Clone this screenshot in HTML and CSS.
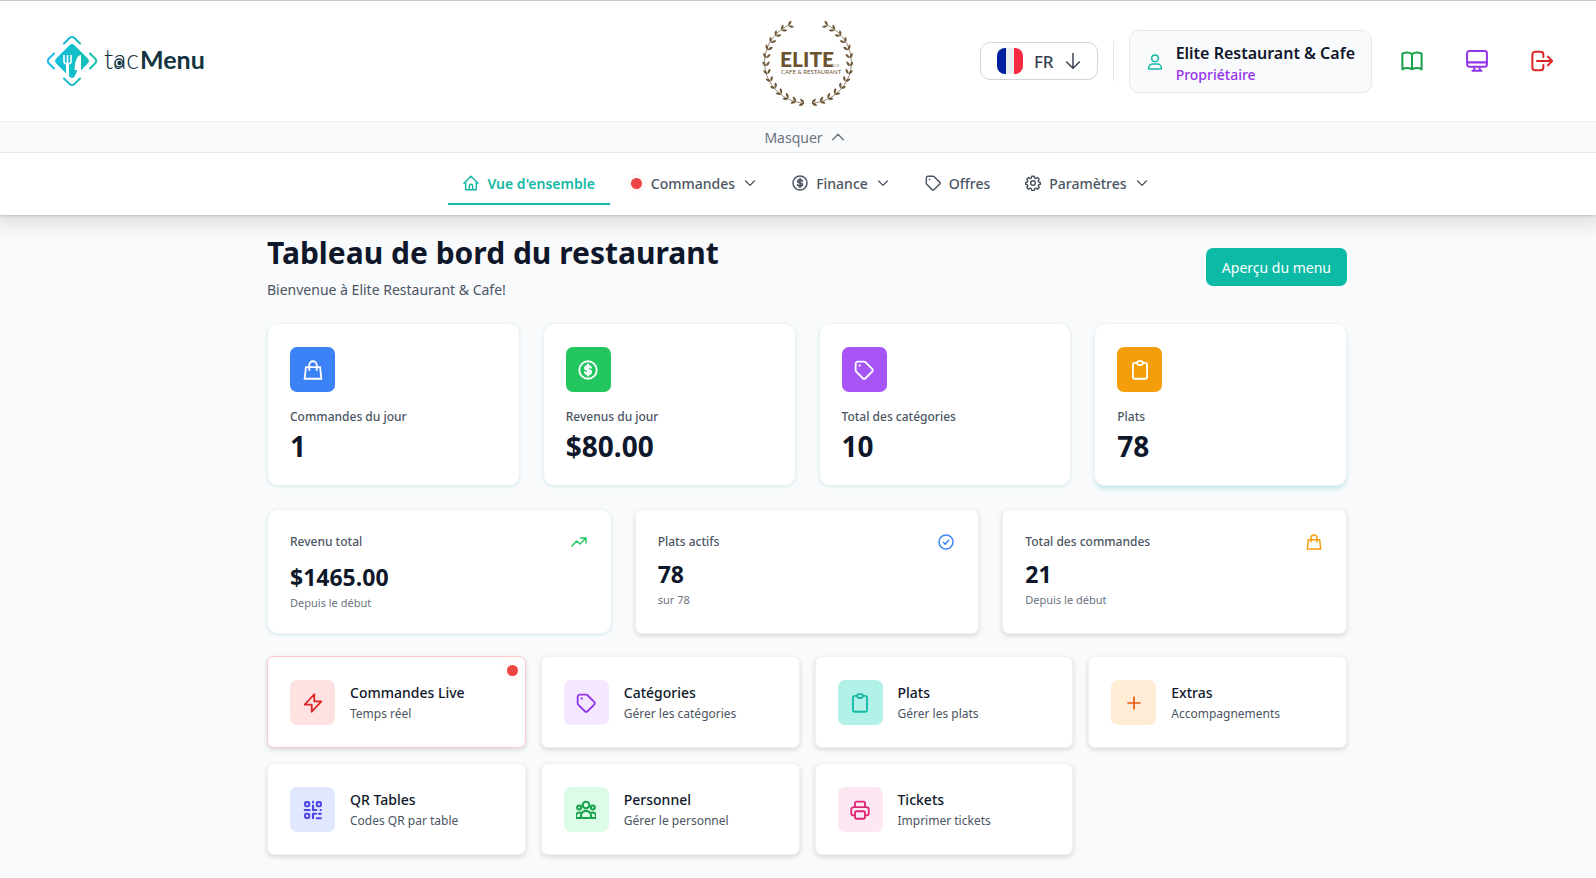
FILE: index.html
```html
<!DOCTYPE html>
<html lang="fr">
<head>
  <meta charset="UTF-8">
  <meta name="viewport" content="width=device-width, initial-scale=1.0">
  <title>tacMenu - Tableau de bord</title>
  <link rel="stylesheet" href="styles.css">
</head>
<body>
  <!-- Shared icons -->
  <svg class="sprite" aria-hidden="true">
    <symbol id="i-home" viewBox="0 0 24 24"><path d="M1.5 12.5 12 2l10.500 10.500M4 10.500V22h16V10.500M9.500 22v-5.500a2.500 2.500 0 0 1 5 0V22"/></symbol>
    <symbol id="i-dollar" viewBox="0 0 24 24"><circle cx="12" cy="12" r="10.500"/><path stroke-width="2.600" d="M15.500 9.200C15 7.900 13.700 7.400 12 7.400c-2 0-3.400.8-3.400 2.300 0 3.400 7 1.400 7 4.600 0 1.500-1.500 2.400-3.600 2.400-1.900 0-3.200-.7-3.700-2M12 5.500v13"/></symbol>
    <symbol id="i-tag" viewBox="0 0 24 24"><path d="M2 4.500A2.500 2.500 0 0 1 4.500 2H12a2.500 2.500 0 0 1 1.800.7l8 8a2.300 2.300 0 0 1 0 3.200l-8 8a2.300 2.300 0 0 1-3.200 0l-8-8A2.500 2.500 0 0 1 2 12.200zM6.500 6.600h.6"/></symbol>
    <symbol id="i-gear" viewBox="0 0 24 24"><circle cx="12" cy="12" r="3.500"/><path d="M10.200 1.800h3.600l.8 2.700 1.600.7 2.500-1.400 2.500 2.500-1.400 2.500.7 1.600 2.700.8v2.600l-2.700.8-.7 1.600 1.400 2.500-2.500 2.500-2.500-1.400-1.600.7-.8 2.700h-3.600l-.8-2.700-1.600-.7-2.500 1.400-2.500-2.500 1.400-2.500-.7-1.600-2.700-.8v-2.600l2.700-.8.7-1.600-1.400-2.500 2.500-2.500 2.500 1.400 1.600-.7z"/></symbol>
    <symbol id="i-down" viewBox="0 0 24 24"><path d="m4.500 8.500 7.500 7.500 7.500-7.500"/></symbol>
    <symbol id="i-up" viewBox="0 0 24 24"><path d="m4 16 8-8 8 8"/></symbol>
    <symbol id="i-bag" viewBox="0 0 24 24"><path stroke-linejoin="miter" d="M3.500 8.500h17L22 22.500H2zM7.500 12V6a4.500 4.500 0 0 1 9 0v6"/></symbol>
    <symbol id="i-clip" viewBox="0 0 24 24"><path d="M8.500 3.500H6A2.500 2.500 0 0 0 3.500 6v14A2.500 2.500 0 0 0 6 22.500h12a2.500 2.500 0 0 0 2.500-2.500V6A2.500 2.500 0 0 0 18 3.500h-2.500"/><rect x="8.500" y="1.300" width="7" height="4.700" rx="2.300"/></symbol>
    <symbol id="i-trend" viewBox="0 0 24 24"><path d="m1.500 18 7-7.500 5 4.500L22 6.500M14.500 6H22.500v7.500"/></symbol>
    <symbol id="i-check" viewBox="0 0 24 24"><circle cx="12" cy="12" r="10.500"/><path d="m8 12.500 2.800 2.700L16 9.500"/></symbol>
    <symbol id="i-bolt" viewBox="0 0 24 24"><path d="M13.500 1.500 2 14h8.500v8.500L22 10h-8.500z"/></symbol>
    <symbol id="i-plus" viewBox="0 0 24 24"><path d="M12 3v18M3 12h18"/></symbol>
    <symbol id="i-qr" viewBox="0 0 24 24"><rect x="2.500" y="2.500" width="5" height="5" rx="1.500"/><rect x="16.500" y="2.500" width="5" height="5" rx="1.500"/><rect x="2.500" y="16.500" width="5" height="5" rx="1.500"/><path d="M12 2v1M12 6.500V12h4M2 12h6M21 12h.5M12 21.800v-5.300h3.500M19 16.500h2.500M16.500 21.800h5"/></symbol>
    <symbol id="i-team" viewBox="0 0 24 24"><circle cx="12" cy="6" r="4"/><circle cx="3.800" cy="9" r="2.400"/><circle cx="20.200" cy="9" r="2.400"/><path d="M6 21.500V19a6 6 0 0 1 12 0v2.500zM6 21.500H0V18.500A4 4 0 0 1 6 15.500M18 21.500h6V18.500a4 4 0 0 0-6-3"/></symbol>
    <symbol id="i-print" viewBox="0 0 24 24"><path d="M6 8.500V4a2 2 0 0 1 2-2h8a2 2 0 0 1 2 2v4.500M6 18.500H4A2.500 2.500 0 0 1 1.500 16v-4.500A3 3 0 0 1 4.500 8.500h15a3 3 0 0 1 3 3V16a2.500 2.500 0 0 1-2.500 2.500h-2"/><rect x="6" y="13.500" width="12" height="9" rx="2"/></symbol>
    <symbol id="i-book" viewBox="0 0 24 24"><path d="M12 4.500C9 2.500 4.500 2.700 1.500 4v17c3-1.500 7.500-1.500 10.500 0 3-1.500 7.500-1.500 10.500 0V4C19.500 2.700 15 2.500 12 4.500zM12 4.500V21"/></symbol>
    <symbol id="i-screen" viewBox="0 0 24 24"><rect x="1.200" y="1.200" width="21.600" height="17" rx="2.500"/><path d="M1.500 13.500h21M9.500 18.500 8.500 22.500M14.500 18.500l1 4M7 22.700h10"/></symbol>
    <symbol id="i-logout" viewBox="0 0 24 24"><path d="M13.500 7.500V5A3 3 0 0 0 10.500 2H4.500a3 3 0 0 0-3 3v14a3 3 0 0 0 3 3h6a3 3 0 0 0 3-3v-2.500M6.500 12H23M18.500 7.200 23 12l-4.500 4.800"/></symbol>
    <symbol id="i-user" viewBox="0 0 24 24"><circle cx="12" cy="6.500" r="5"/><path d="M2.500 22.500v-1.500a6 6 0 0 1 6-6h7a6 6 0 0 1 6 6v1.500z"/></symbol>
    <symbol id="i-arrow" viewBox="0 0 24 24"><path d="M12 0v23M2.500 13.500l9.500 9.500 9.500-9.500"/></symbol>
    <symbol id="leaf" viewBox="-5 -5 10 10" overflow="visible"><path d="M0 3.500Q-4.800 2.500-4.500-2.500-.2-1.500 0 3.500Q.2-1.500 4.500-2.500 4.800 2.500 0 3.500z"/></symbol>
  </svg>

  <header class="header">
    <div class="topbar">
      <a class="brand" href="#" aria-label="tacMenu">
        <svg width="164" height="52" viewBox="0 0 164 52">
          <defs>
            <linearGradient id="teal" gradientUnits="userSpaceOnUse" x1="0" y1="20" x2="50" y2="30">
              <stop offset="0" stop-color="#1fb6ee"/>
              <stop offset="1" stop-color="#14c3a8"/>
            </linearGradient>
            <linearGradient id="teal-box" x1="0" y1="1" x2="1" y2="0">
              <stop offset="0" stop-color="#15bde0"/>
              <stop offset="1" stop-color="#14bfb2"/>
            </linearGradient>
          </defs>
          <rect x="12" y="13" width="26" height="26" rx="4" fill="url(#teal-box)" transform="rotate(45 25 26)"/>
          <g fill="none" stroke="url(#teal)" stroke-width="2" stroke-linecap="round" stroke-linejoin="round">
            <path d="M17 8.500 22.500 3q2.500-2 5 0L33 8.500M17 43.500l5.500 5.500q2.500 2 5 0l5.500-5.500M7 18.500 1.500 24q-1.500 2 0 4L7 33.500M43 18.500l5.500 5.500q1.500 2 0 4L43 33.500"/>
          </g>
          <path d="M17 20v6.500q0 2.500 3.500 2.500t3.500-2.500V20M20.500 20v8" fill="none" stroke="#fff" stroke-width="1.600"/>
          <path d="M19 28h3v14l-3-2.500zM34 20q-6 1-6.500 15H30q-1 5-3 6.500 4.500-.5 7-3z" fill="#fff"/>
          <text class="brand-light" x="57" y="34">tac</text>
          <text class="brand-bold" x="93" y="34">Menu</text>
          <circle cx="72" cy="28" r="4" fill="#fff" stroke="#12343f" stroke-width="1.500"/>
          <circle cx="72.500" cy="28" r="2.200" fill="#12343f"/>
        </svg>
      </a>

      <svg class="elite" width="92" height="94" viewBox="0 0 92 94" role="img" aria-label="Elite Cafe &amp; Restaurant">
        <g id="wreath" fill="#6f5a3c" stroke="none"></g>
        <text class="elite-name" x="19" y="53">ELITE</text>
        <text class="elite-ice" x="71" y="53">ice</text>
        <text class="elite-sub" x="20" y="60">CAFE &amp; RESTAURANT</text>
      </svg>

      <div class="tools">
        <button class="lang" type="button">
          <svg width="26" height="26" viewBox="0 0 26 26">
            <clipPath id="flag"><rect width="26" height="26" rx="8"/></clipPath>
            <g clip-path="url(#flag)">
              <path fill="#00209f" d="M0 0h9v26H0z"/>
              <path fill="#eee" d="M9 0h8v26H9z"/>
              <path fill="#f42a41" d="M17 0h9v26h-9z"/>
            </g>
          </svg>
          <span>FR</span>
          <svg class="icon icon-16"><use href="#i-arrow"/></svg>
        </button>
        <span class="divider"></span>
        <div class="user">
          <svg class="icon icon-16"><use href="#i-user"/></svg>
          <div>
            <div class="user-name">Elite Restaurant &amp; Cafe</div>
            <div class="user-role">Propriétaire</div>
          </div>
        </div>
        <div class="actions">
          <button class="action green" type="button" aria-label="Menu"><svg class="icon icon-22"><use href="#i-book"/></svg></button>
          <button class="action purple" type="button" aria-label="Écran"><svg class="icon icon-22"><use href="#i-screen"/></svg></button>
          <button class="action red" type="button" aria-label="Déconnexion"><svg class="icon icon-22"><use href="#i-logout"/></svg></button>
        </div>
      </div>
    </div>

    <button class="collapse" type="button">
      Masquer
      <svg class="icon icon-16"><use href="#i-up"/></svg>
    </button>

    <nav class="nav">
      <a class="tab active" href="#"><svg class="icon icon-16"><use href="#i-home"/></svg>Vue d'ensemble</a>
      <a class="tab" href="#"><span class="dot"></span>Commandes<svg class="icon icon-14"><use href="#i-down"/></svg></a>
      <a class="tab" href="#"><svg class="icon icon-16"><use href="#i-dollar"/></svg>Finance<svg class="icon icon-14"><use href="#i-down"/></svg></a>
      <a class="tab" href="#"><svg class="icon icon-16"><use href="#i-tag"/></svg>Offres</a>
      <a class="tab" href="#"><svg class="icon icon-16"><use href="#i-gear"/></svg>Paramètres<svg class="icon icon-14"><use href="#i-down"/></svg></a>
    </nav>
  </header>

  <main class="main">
    <div class="container">
      <div class="page-head">
        <div>
          <h1>Tableau de bord du restaurant</h1>
          <p>Bienvenue à Elite Restaurant &amp; Cafe!</p>
        </div>
        <button class="preview" type="button">Aperçu du menu</button>
      </div>

      <section class="grid stats">
        <div class="card stat">
          <span class="badge bg-blue"><svg class="icon icon-20"><use href="#i-bag"/></svg></span>
          <div class="label">Commandes du jour</div>
          <div class="value">1</div>
        </div>
        <div class="card stat">
          <span class="badge bg-green"><svg class="icon icon-20"><use href="#i-dollar"/></svg></span>
          <div class="label">Revenus du jour</div>
          <div class="value">$80.00</div>
        </div>
        <div class="card stat">
          <span class="badge bg-purple"><svg class="icon icon-20"><use href="#i-tag"/></svg></span>
          <div class="label">Total des catégories</div>
          <div class="value">10</div>
        </div>
        <div class="card stat raised">
          <span class="badge bg-amber"><svg class="icon icon-20"><use href="#i-clip"/></svg></span>
          <div class="label">Plats</div>
          <div class="value">78</div>
        </div>
      </section>

      <section class="grid totals">
        <div class="card total soft">
          <div class="total-head"><span class="label">Revenu total</span><svg class="icon icon-16 c-green"><use href="#i-trend"/></svg></div>
          <div class="amount">$1465.00</div>
          <div class="note">Depuis le début</div>
        </div>
        <div class="card total">
          <div class="total-head"><span class="label">Plats actifs</span><svg class="icon icon-16 c-blue"><use href="#i-check"/></svg></div>
          <div class="amount">78</div>
          <div class="note">sur 78</div>
        </div>
        <div class="card total">
          <div class="total-head"><span class="label">Total des commandes</span><svg class="icon icon-16 c-amber"><use href="#i-bag"/></svg></div>
          <div class="amount">21</div>
          <div class="note">Depuis le début</div>
        </div>
      </section>

      <section class="grid links">
        <a class="card link live" href="#">
          <span class="badge t-red"><svg class="icon icon-20"><use href="#i-bolt"/></svg></span>
          <div><div class="link-title">Commandes Live</div><div class="link-text">Temps réel</div></div>
          <span class="dot live-dot"></span>
        </a>
        <a class="card link" href="#">
          <span class="badge t-purple"><svg class="icon icon-20"><use href="#i-tag"/></svg></span>
          <div><div class="link-title">Catégories</div><div class="link-text">Gérer les catégories</div></div>
        </a>
        <a class="card link" href="#">
          <span class="badge t-teal"><svg class="icon icon-20"><use href="#i-clip"/></svg></span>
          <div><div class="link-title">Plats</div><div class="link-text">Gérer les plats</div></div>
        </a>
        <a class="card link" href="#">
          <span class="badge t-orange"><svg class="icon icon-16 bold"><use href="#i-plus"/></svg></span>
          <div><div class="link-title">Extras</div><div class="link-text">Accompagnements</div></div>
        </a>
        <a class="card link" href="#">
          <span class="badge t-indigo"><svg class="icon icon-20 bold"><use href="#i-qr"/></svg></span>
          <div><div class="link-title">QR Tables</div><div class="link-text">Codes QR par table</div></div>
        </a>
        <a class="card link" href="#">
          <span class="badge t-green"><svg class="icon icon-20 bold"><use href="#i-team"/></svg></span>
          <div><div class="link-title">Personnel</div><div class="link-text">Gérer le personnel</div></div>
        </a>
        <a class="card link" href="#">
          <span class="badge t-pink"><svg class="icon icon-20"><use href="#i-print"/></svg></span>
          <div><div class="link-title">Tickets</div><div class="link-text">Imprimer tickets</div></div>
        </a>
      </section>
    </div>
  </main>

  <script>
    // Laurel wreath: leaf pairs along each side of the circle
    const wreath = document.getElementById("wreath");
    let leaves = "";
    for (let i = 0; i < 14; i++) {
      const deg = 9 + i * 11.3;
      const rad = deg * Math.PI / 180;
      const dx = Math.sin(rad) * 42;
      const y = 48 + Math.cos(rad) * 41;
      leaves += `<g transform="translate(${47 + dx} ${y}) rotate(${90 - deg})"><use href="#leaf" x="-4" y="-4" width="8" height="8"/></g>`;
      leaves += `<g transform="translate(${47 - dx} ${y}) rotate(${deg - 90})"><use href="#leaf" x="-4" y="-4" width="8" height="8"/></g>`;
    }
    leaves += '<path fill="none" stroke="#6f5a3c" stroke-width=".7" d="M53 89A42 41 0 0 0 66 11M41 89A42 41 0 0 1 28 11"/>';
    wreath.innerHTML = leaves;
  </script>
</body>
</html>
```
FILE: styles.css
```css
* {
  box-sizing: border-box;
}
body {
  margin: 0;
  font-family: "Noto Sans", "Open Sans", sans-serif;
  font-size: 14px;
  color: #0f172a;
  background: #f9fafc;
}
a {
  color: inherit;
  text-decoration: none;
}
button {
  font-family: inherit;
  cursor: pointer;
}
.sprite {
  position: absolute;
  width: 0;
  height: 0;
}
.icon {
  flex: none;
  fill: none;
  stroke: currentColor;
  stroke-width: 2.2;
  stroke-linecap: round;
  stroke-linejoin: round;
  overflow: visible;
}
.icon.bold {
  stroke-width: 2.5;
}
.icon-14 { width: 14px; height: 14px; }
.icon-16 { width: 16px; height: 16px; }
.icon-20 { width: 20px; height: 20px; }
.icon-22 { width: 22px; height: 22px; }

/* Header */
.header {
  position: relative;
  background: #fff;
  border-top: 1px solid #c8c8c8;
  box-shadow: 0 0 3px rgba(0, 0, 0, 0.3), 0 4px 16px 6px rgba(0, 0, 0, 0.1);
}
.topbar {
  display: grid;
  grid-template-columns: 1fr auto 1fr;
  align-items: center;
  height: 120px;
  padding: 0 30px 0 47px;
}
.brand svg,
.elite {
  display: block;
}
.brand text {
  font-family: Lato, sans-serif;
  fill: #12343f;
}
.brand .brand-light { font-size: 27px; font-weight: 300; }
.brand .brand-bold { font-size: 25px; font-weight: 700; }
.elite text {
  font-family: Lato, sans-serif;
  fill: #6b5230;
}
.elite .elite-name { font-size: 21px; font-weight: 900; }
.elite .elite-ice { font-size: 6px; fill: #b9b0a2; }
.elite .elite-sub { font-size: 6px; }
.tools {
  display: flex;
  align-items: center;
  justify-content: flex-end;
}
.lang {
  display: flex;
  align-items: center;
  gap: 11px;
  height: 38px;
  padding: 0 16px;
  font-size: 17px;
  font-weight: 500;
  color: #374151;
  background: #fff;
  border: 1px solid #d1d5db;
  border-radius: 10px;
}
.divider {
  width: 1px;
  height: 40px;
  margin: 0 15px;
  background: #e5e7eb;
}
.user {
  display: flex;
  align-items: center;
  gap: 13px;
  padding: 10px 16px 8px 17px;
  background: #f9fafc;
  border: 1px solid #e5e7eb;
  border-radius: 10px;
  white-space: nowrap;
}
.user .icon {
  color: #14b8a6;
}
.user-name {
  font-size: 16px;
  font-weight: 600;
  line-height: 24px;
}
.user-role {
  font-size: 14px;
  font-weight: 500;
  line-height: 19px;
  color: #9333ea;
}
.actions {
  display: flex;
  gap: 17px;
  margin-left: 16px;
}
.action {
  display: grid;
  place-items: center;
  width: 48px;
  height: 48px;
  padding: 0;
  background: none;
  border: none;
}
.green { color: #16a34a; }
.purple { color: #9333ea; }
.red { color: #dc2626; }
.collapse {
  display: flex;
  align-items: center;
  justify-content: center;
  gap: 7px;
  width: 100%;
  height: 32px;
  padding: 0 0 0 14px;
  font-size: 14px;
  color: #6b7280;
  background: #f9fafc;
  border: solid #e5e7eb;
  border-width: 1px 0;
  border-top-color: #f0f2f5;
}
.nav {
  display: flex;
  justify-content: center;
  gap: 5px;
  padding: 10px 0 10px 16px;
}
.tab {
  display: flex;
  align-items: center;
  gap: 8px;
  height: 42px;
  padding: 0 15px;
  font-weight: 500;
  color: #4b5563;
  border-bottom: 2px solid transparent;
}
.tab.active {
  font-weight: 600;
  color: #14b8a6;
  border-bottom-color: #14b8a6;
}
.dot {
  width: 11px;
  height: 11px;
  margin: 0 1px;
  border-radius: 50%;
  background: #ef4444;
  box-shadow: 0 0 0 4px rgba(239, 68, 68, 0.04);
}

/* Content */
.main {
  padding: 18px 0 22px 18px;
}
.container {
  max-width: 1080px;
  margin: 0 auto;
}
.page-head {
  display: flex;
  align-items: center;
  justify-content: space-between;
  margin-bottom: 22px;
}
h1 {
  margin: 0;
  font-size: 30px;
  font-weight: 700;
  line-height: 40px;
}
.page-head p {
  margin: 6px 0 0;
  line-height: 22px;
  color: #4b5563;
}
.preview {
  height: 38px;
  padding: 0 16px;
  font-size: 14px;
  color: #fff;
  background: #0cbaa6;
  border: none;
  border-radius: 7px;
}
.grid {
  display: grid;
}
.stats {
  grid-template-columns: repeat(4, 1fr);
  gap: 23px;
  margin-bottom: 23px;
}
.totals {
  grid-template-columns: repeat(3, 1fr);
  gap: 23px;
  margin-bottom: 22px;
}
.links {
  grid-template-columns: repeat(4, 1fr);
  gap: 15px;
}
.card {
  padding: 22px;
  background: #fff;
  border: 1px solid #f0f2f5;
  border-radius: 7px;
  box-shadow: 0 2px 5px rgba(0, 0, 0, 0.14);
}
.stat,
.soft {
  border-radius: 11px;
  box-shadow: 0 1px 3px rgba(20, 184, 166, 0.18);
}
.stat {
  padding: 23px 22px 22px;
}
.raised {
  box-shadow: 0 4px 5px -1px rgba(20, 184, 166, 0.25);
}
.badge {
  display: grid;
  place-items: center;
  flex: none;
  width: 45px;
  height: 45px;
  border-radius: 7px;
  color: #fff;
}
.bg-blue { background: #3b82f6; }
.bg-green { background: #22c55e; }
.bg-purple { background: #a855f7; }
.bg-amber { background: #f59e0b; }
.t-red { color: #dc2626; background: #fee2e2; }
.t-purple { color: #9333ea; background: #f3e8ff; }
.t-teal { color: #14b8a6; background: #b2f1e8; }
.t-orange { color: #ea580c; background: #ffedd5; }
.t-indigo { color: #4f46e5; background: #e0e7ff; }
.t-green { color: #16a34a; background: #dcfce7; }
.t-pink { color: #db2777; background: #fce7f3; }
.c-green { color: #22c55e; }
.c-blue { color: #3b82f6; }
.c-amber { color: #f59e0b; }
.label {
  font-size: 12px;
  font-weight: 500;
  line-height: 19px;
  color: #4b5563;
}
.stat .label {
  margin-top: 15px;
}
.value {
  margin-top: 3px;
  font-size: 28px;
  font-weight: 700;
  line-height: 34px;
}
.total {
  padding: 22px 24px 19px 22px;
}
.total-head {
  display: flex;
  align-items: center;
  justify-content: space-between;
}
.amount {
  margin-top: 8px;
  font-size: 23px;
  font-weight: 700;
  line-height: 30px;
}
.soft .amount {
  margin-top: 11px;
}
.note {
  font-size: 11px;
  line-height: 22px;
  color: #6b7280;
}
.link {
  position: relative;
  display: flex;
  align-items: center;
  gap: 15px;
  padding-top: 23px;
}
.live {
  border-color: #fecaca;
}
.live-dot {
  position: absolute;
  top: 8px;
  right: 6px;
}
.link-title {
  font-weight: 500;
  line-height: 22px;
}
.link-text {
  font-size: 12px;
  line-height: 20px;
  color: #4b5563;
}
```
